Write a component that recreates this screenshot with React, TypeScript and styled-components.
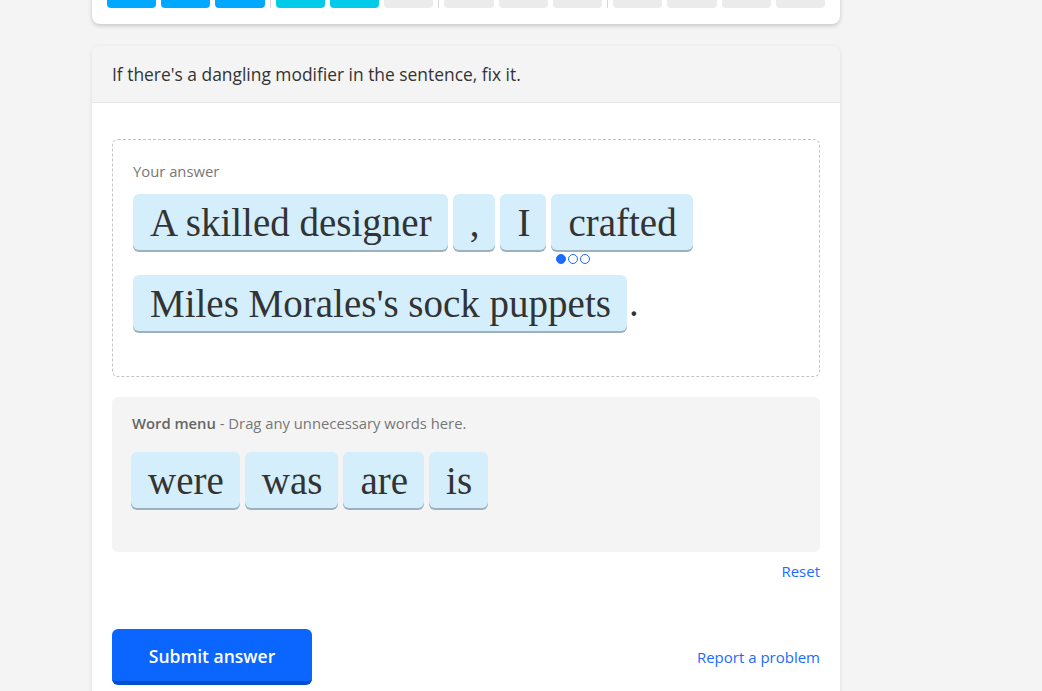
import React from "react";
import styled, { createGlobalStyle } from "styled-components";

const GlobalStyle = createGlobalStyle`
  html, body {
    margin: 0;
    padding: 0;
    background: #f4f4f4;
    overflow: hidden;
  }
  body {
    font-family: "Open Sans", "Noto Sans", sans-serif;
    color: #333;
  }
`;

const Page = styled.div`
  width: 1042px;
  height: 691px;
  padding-left: 92px;
  box-sizing: border-box;
`;

const Column = styled.div`
  width: 748px;
  display: flex;
  flex-direction: column;
  gap: 22px;
`;

const ProgressCard = styled.div`
  margin-top: -19px;
  background: #fff;
  border-radius: 8px;
  box-shadow: 0 2px 4px rgba(0, 0, 0, 0.18);
  padding: 0 15px 16px;
  display: flex;
  gap: 5px;
`;

const Segment = styled.div<{ color: string }>`
  flex: 1;
  height: 27px;
  background: ${(p) => p.color};
  border-radius: 0 0 4px 4px;
`;

const Divider = styled.div`
  width: 1px;
  height: 27px;
  background: #d8d8d8;
`;

const Card = styled.div`
  background: #fff;
  border-radius: 8px 8px 0 0;
  box-shadow: 0 1px 4px rgba(0, 0, 0, 0.1);
  overflow: hidden;
`;

const CardHeader = styled.div`
  height: 57px;
  box-sizing: border-box;
  background: #f4f4f4;
  border-bottom: 1px solid #e6e6e6;
  display: flex;
  align-items: center;
  padding: 0 20px;
  font-size: 17.4px;
  color: #333;
`;

const CardBody = styled.div`
  padding: 36px 20px 40px;
  display: flex;
  flex-direction: column;
`;

const AnswerBox = styled.div`
  border: 1px dashed #c4c4c4;
  border-radius: 6px;
  padding: 22px 20px 45px;
`;

const Label = styled.div`
  font-size: 14.8px;
  color: #777;
  line-height: 18px;
  margin-bottom: 14px;
`;

const Strong = styled.span`
  font-weight: 600;
  color: #666;
`;

const Rows = styled.div`
  display: flex;
  flex-direction: column;
  gap: 25px;
`;

const Row = styled.div`
  display: flex;
  align-items: flex-start;
  gap: 5px;
`;

const Tile = styled.div`
  position: relative;
  height: 56px;
  padding: 0 16px 0 17px;
  background: #d4eefc;
  border-radius: 6px;
  box-shadow: 0 2px 0 #9cb0bd;
  display: flex;
  align-items: center;
  font-family: "Liberation Serif", "Times New Roman", serif;
  font-size: 39px;
  color: #333;
  white-space: nowrap;
`;

const Period = styled.span`
  font-family: "Liberation Serif", "Times New Roman", serif;
  font-size: 39px;
  line-height: 56px;
  margin-left: -3px;
  color: #333;
`;

const Dots = styled.div`
  position: absolute;
  left: 5px;
  top: 60px;
  display: flex;
  gap: 2px;
`;

const Dot = styled.span<{ filled?: boolean }>`
  width: 10px;
  height: 10px;
  box-sizing: border-box;
  border-radius: 50%;
  border: 1.5px solid #1a6cff;
  background: ${(p) => (p.filled ? "#1a6cff" : "#fff")};
`;

const MenuBox = styled.div`
  margin-top: 20px;
  background: #f4f4f4;
  border-radius: 6px;
  padding: 17px 20px 44px;
`;

const MenuLabel = styled(Label)`
  margin-bottom: 20px;
`;

const MenuRow = styled(Row)`
  margin-left: -1px;
`;

const ResetRow = styled.div`
  display: flex;
  justify-content: flex-end;
  margin-top: 10px;
`;

const LinkText = styled.a`
  font-size: 15px;
  color: #1a6cff;
  text-decoration: none;
  line-height: 18px;
`;

const Footer = styled.div`
  display: flex;
  justify-content: space-between;
  align-items: center;
  margin-top: 49px;
`;

const SubmitButton = styled.button`
  width: 200px;
  height: 56px;
  box-sizing: border-box;
  border: none;
  border-bottom: 4px solid #0050d0;
  border-radius: 6px;
  background: #0a66ff;
  color: #fff;
  font-family: "Open Sans", "Noto Sans", sans-serif;
  font-size: 17.5px;
  font-weight: 600;
  padding-top: 3px;
`;

const segments = [
  "#00a8ff", "#00a8ff", "#00a8ff", "|",
  "#00cbe8", "#00cbe8", "#ebebeb", "|",
  "#ebebeb", "#ebebeb", "#ebebeb", "|",
  "#ebebeb", "#ebebeb", "#ebebeb", "#ebebeb",
];

const menuWords = ["were", "was", "are", "is"];

export default function App() {
  return (
    <Page>
      <GlobalStyle />
      <Column>
        <ProgressCard>
          {segments.map((c, i) =>
            c === "|" ? <Divider key={i} /> : <Segment key={i} color={c} />
          )}
        </ProgressCard>
        <Card>
          <CardHeader>If there's a dangling modifier in the sentence, fix it.</CardHeader>
          <CardBody>
            <AnswerBox>
              <Label>Your answer</Label>
              <Rows>
                <Row>
                  <Tile>A skilled designer</Tile>
                  <Tile>,</Tile>
                  <Tile>I</Tile>
                  <Tile>
                    crafted
                    <Dots>
                      <Dot filled />
                      <Dot />
                      <Dot />
                    </Dots>
                  </Tile>
                </Row>
                <Row>
                  <Tile>Miles Morales's sock puppets</Tile>
                  <Period>.</Period>
                </Row>
              </Rows>
            </AnswerBox>
            <MenuBox>
              <MenuLabel>
                <Strong>Word menu</Strong> - Drag any unnecessary words here.
              </MenuLabel>
              <MenuRow>
                {menuWords.map((w) => (
                  <Tile key={w}>{w}</Tile>
                ))}
              </MenuRow>
            </MenuBox>
            <ResetRow>
              <LinkText href="#">Reset</LinkText>
            </ResetRow>
            <Footer>
              <SubmitButton>Submit answer</SubmitButton>
              <LinkText href="#">Report a problem</LinkText>
            </Footer>
          </CardBody>
        </Card>
      </Column>
    </Page>
  );
}
